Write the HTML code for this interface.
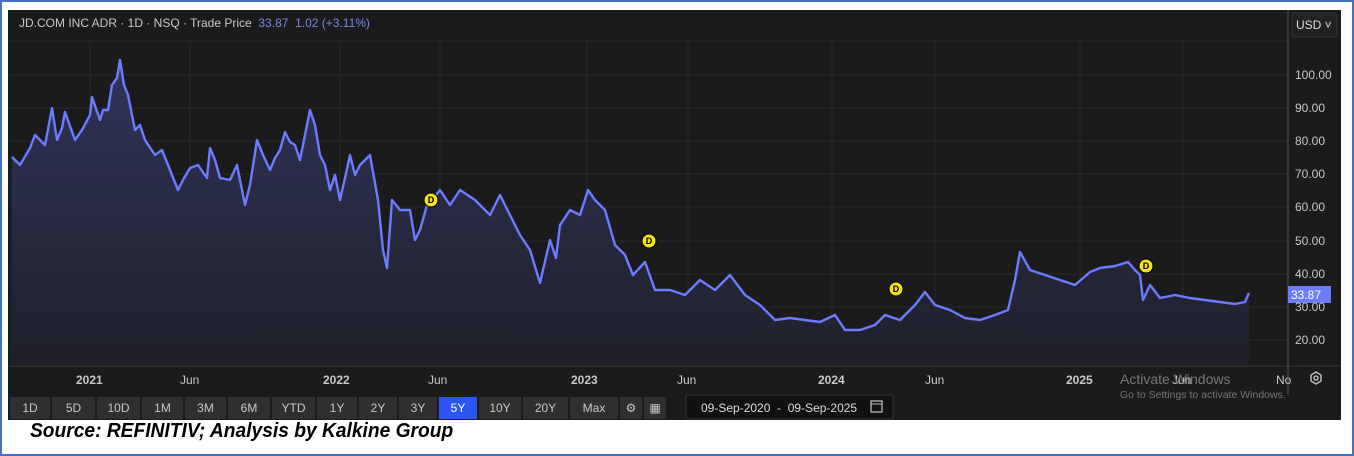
<!DOCTYPE html>
<html><head><meta charset="utf-8"><style>
body{margin:0;width:1354px;height:456px;background:#fff;overflow:hidden;font-family:"Liberation Sans",sans-serif;position:relative}
.frame{position:absolute;left:0;top:0;width:1350px;height:452px;border:2px solid #4472c4}
.chart{position:absolute;left:8px;top:10px;width:1333px;height:410px;background:#1b1b1c}
.t{position:absolute;font-size:12px;color:#c8c8c8;white-space:nowrap}
.btn{position:absolute;top:397px;height:22px;background:#2f2f31;color:#c8c8c8;font-size:12px;line-height:22px;text-align:center}
.src{position:absolute;left:30px;top:420px;font-size:20px;font-weight:bold;font-style:italic;color:#000;transform:scaleX(.96);transform-origin:left}
</style></head><body>
<div class="frame"></div>
<div class="chart"></div>
<svg style="position:absolute;left:0;top:0" width="1354" height="456">
<defs><linearGradient id="g" x1="0" y1="0" x2="0" y2="1"><stop offset="0" stop-color="#30345a"/><stop offset="1" stop-color="#1f2029"/></linearGradient></defs>
<g stroke="#2a2a2c" stroke-width="1">
<line x1="10" y1="41" x2="1288" y2="41"/><line x1="10" y1="75" x2="1288" y2="75"/><line x1="10" y1="108" x2="1288" y2="108"/><line x1="10" y1="141" x2="1288" y2="141"/><line x1="10" y1="174" x2="1288" y2="174"/><line x1="10" y1="207" x2="1288" y2="207"/><line x1="10" y1="241" x2="1288" y2="241"/><line x1="10" y1="274" x2="1288" y2="274"/><line x1="10" y1="307" x2="1288" y2="307"/><line x1="10" y1="340" x2="1288" y2="340"/>
<line x1="90" y1="42" x2="90" y2="365"/><line x1="190" y1="42" x2="190" y2="365"/><line x1="340" y1="42" x2="340" y2="365"/><line x1="440" y1="42" x2="440" y2="365"/><line x1="587" y1="42" x2="587" y2="365"/><line x1="688" y1="42" x2="688" y2="365"/><line x1="832" y1="42" x2="832" y2="365"/><line x1="935" y1="42" x2="935" y2="365"/><line x1="1080" y1="42" x2="1080" y2="365"/><line x1="1183" y1="42" x2="1183" y2="365"/>
</g>
<line x1="8" y1="366" x2="1341" y2="366" stroke="#3a3a3c"/>
<line x1="1288" y1="10" x2="1288" y2="395" stroke="#55555a"/>
<polygon fill="url(#g)" points="10,365 12,157 20,165 30,148 35,135 45,145 52,108 57,140 62,128 65,112 75,140 82,130 90,115 92,97 100,120 103,110 108,110 112,85 117,78 120,60 124,85 128,95 132,115 135,130 140,125 145,140 155,155 162,150 170,170 178,190 183,180 190,168 198,165 207,178 210,148 215,160 220,178 230,180 237,165 245,205 250,185 257,140 263,155 270,170 275,158 280,150 285,132 290,142 295,145 300,160 305,135 310,110 315,125 320,155 325,165 330,190 335,175 340,200 345,178 350,155 355,175 360,165 370,155 378,200 383,250 387,268 392,200 400,210 410,210 415,240 420,230 427,205 432,200 440,190 450,205 460,190 475,200 490,215 500,195 505,205 520,235 530,250 540,283 550,240 556,258 560,225 570,210 580,215 588,190 595,200 605,210 615,245 625,255 633,275 645,262 655,290 670,290 685,295 700,280 715,290 730,275 745,295 760,305 775,320 790,318 805,320 820,322 835,315 845,330 860,330 875,325 885,315 900,320 915,305 925,292 935,305 950,310 965,318 980,320 995,315 1008,310 1015,280 1020,252 1030,270 1045,275 1060,280 1075,285 1090,272 1100,268 1115,266 1128,262 1135,270 1140,275 1143,300 1150,285 1160,298 1175,295 1190,298 1205,300 1220,302 1235,304 1245,302 1249,293 1249,365"/>
<polyline fill="none" stroke="#6b7cff" stroke-width="2.4" stroke-linejoin="round" points="12,157 20,165 30,148 35,135 45,145 52,108 57,140 62,128 65,112 75,140 82,130 90,115 92,97 100,120 103,110 108,110 112,85 117,78 120,60 124,85 128,95 132,115 135,130 140,125 145,140 155,155 162,150 170,170 178,190 183,180 190,168 198,165 207,178 210,148 215,160 220,178 230,180 237,165 245,205 250,185 257,140 263,155 270,170 275,158 280,150 285,132 290,142 295,145 300,160 305,135 310,110 315,125 320,155 325,165 330,190 335,175 340,200 345,178 350,155 355,175 360,165 370,155 378,200 383,250 387,268 392,200 400,210 410,210 415,240 420,230 427,205 432,200 440,190 450,205 460,190 475,200 490,215 500,195 505,205 520,235 530,250 540,283 550,240 556,258 560,225 570,210 580,215 588,190 595,200 605,210 615,245 625,255 633,275 645,262 655,290 670,290 685,295 700,280 715,290 730,275 745,295 760,305 775,320 790,318 805,320 820,322 835,315 845,330 860,330 875,325 885,315 900,320 915,305 925,292 935,305 950,310 965,318 980,320 995,315 1008,310 1015,280 1020,252 1030,270 1045,275 1060,280 1075,285 1090,272 1100,268 1115,266 1128,262 1135,270 1140,275 1143,300 1150,285 1160,298 1175,295 1190,298 1205,300 1220,302 1235,304 1245,302 1249,293"/>
<g font-family="Liberation Sans" font-size="9" font-weight="bold" text-anchor="middle">
<circle cx="431" cy="200" r="7" fill="#f5e21a" stroke="#000"/><text x="431" y="203">D</text>
<circle cx="649" cy="241" r="7" fill="#f5e21a" stroke="#000"/><text x="649" y="244">D</text>
<circle cx="896" cy="289" r="7" fill="#f5e21a" stroke="#000"/><text x="896" y="292">D</text>
<circle cx="1146" cy="266" r="7" fill="#f5e21a" stroke="#000"/><text x="1146" y="269">D</text>
</g>
<rect x="1292" y="13" width="45" height="24" rx="3" fill="#222224" stroke="#333"/>
<rect x="1288" y="286" width="43" height="17" fill="#6b7cff"/>
<g fill="none" stroke="#bbb" stroke-width="1.5"><path d="M1316 372l5 3v6l-5 3l-5-3v-6z"/><circle cx="1316" cy="378" r="2"/></g>
<rect x="686" y="395" width="207" height="24" fill="#111" stroke="#333"/>
<rect x="871" y="401" width="11" height="11" fill="none" stroke="#bbb" stroke-width="1.3"/><line x1="871" y1="404" x2="882" y2="404" stroke="#bbb"/>
</svg>
<div class="t" style="left:19px;top:16px;font-size:12px">JD.COM INC ADR · 1D · NSQ · Trade Price <span style="color:#7b86f0">&nbsp;33.87 &nbsp;1.02 (+3.11%)</span></div>
<div class="t" style="left:1296px;top:18px;font-size:12px;color:#ddd">USD ˅</div>
<div class="t" style="left:1295px;top:68px">100.00</div><div class="t" style="left:1295px;top:101px">90.00</div><div class="t" style="left:1295px;top:134px">80.00</div><div class="t" style="left:1295px;top:167px">70.00</div><div class="t" style="left:1295px;top:200px">60.00</div><div class="t" style="left:1295px;top:234px">50.00</div><div class="t" style="left:1295px;top:267px">40.00</div><div class="t" style="left:1295px;top:300px">30.00</div><div class="t" style="left:1295px;top:333px">20.00</div>
<div class="t" style="left:1291px;top:288px;color:#fff">33.87</div>
<div class="t" style="left:76px;top:373px;font-weight:bold">2021</div><div class="t" style="left:180px;top:373px">Jun</div><div class="t" style="left:323px;top:373px;font-weight:bold">2022</div><div class="t" style="left:428px;top:373px">Jun</div><div class="t" style="left:571px;top:373px;font-weight:bold">2023</div><div class="t" style="left:677px;top:373px">Jun</div><div class="t" style="left:818px;top:373px;font-weight:bold">2024</div><div class="t" style="left:925px;top:373px">Jun</div><div class="t" style="left:1066px;top:373px;font-weight:bold">2025</div><div class="t" style="left:1172px;top:373px">Jun</div><div class="t" style="left:1276px;top:373px">No</div>
<div class="t" style="left:1120px;top:371px;font-size:14px;color:#777">Activate Windows</div>
<div class="t" style="left:1120px;top:389px;font-size:10.5px;color:#777">Go to Settings to activate Windows.</div>
<div class="btn" style="left:10px;width:40px">1D</div><div class="btn" style="left:52px;width:43px">5D</div><div class="btn" style="left:97px;width:43px">10D</div><div class="btn" style="left:142px;width:41px">1M</div><div class="btn" style="left:185px;width:41px">3M</div><div class="btn" style="left:228px;width:42px">6M</div><div class="btn" style="left:272px;width:43px">YTD</div><div class="btn" style="left:317px;width:40px">1Y</div><div class="btn" style="left:359px;width:38px">2Y</div><div class="btn" style="left:399px;width:38px">3Y</div><div class="btn" style="left:439px;width:38px;background:#2d55f5;color:#fff">5Y</div><div class="btn" style="left:479px;width:42px">10Y</div><div class="btn" style="left:523px;width:45px">20Y</div><div class="btn" style="left:570px;width:48px">Max</div><div class="btn" style="left:620px;width:22px">⚙</div><div class="btn" style="left:644px;width:22px">▦</div>
<div class="t" style="left:701px;top:401px;font-size:12px;color:#ddd">09-Sep-2020 &nbsp;- &nbsp;09-Sep-2025</div>
<div class="src">Source: REFINITIV; Analysis by Kalkine Group</div>
</body></html>
